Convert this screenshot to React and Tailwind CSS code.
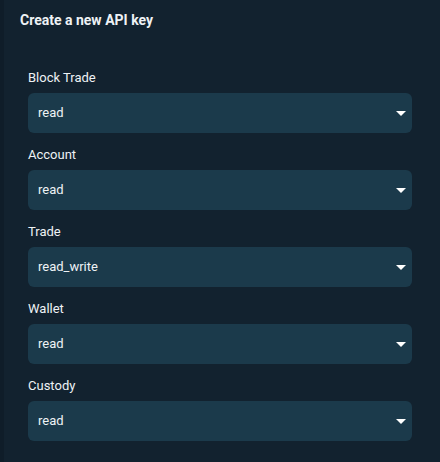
const fields = [
  { label: "Block Trade", value: "read" },
  { label: "Account", value: "read" },
  { label: "Trade", value: "read_write" },
  { label: "Wallet", value: "read" },
  { label: "Custody", value: "read" },
];

const Arrow = () => (
  <svg width="10" height="5" viewBox="0 0 10 5" className="shrink-0">
    <path d="M0 0 L10 0 L5 5 Z" fill="#ffffff" />
  </svg>
);

export default function App() {
  return (
    <div className="w-[440px] h-[462px] bg-[#0f1d29] font-['Roboto',sans-serif] text-[#eef2f5] overflow-hidden">
      <div className="ml-[4px] h-full bg-[#12222f] pt-[11px]">
        <h1 className="pl-[16px] text-[14px] font-bold leading-[18px]">Create a new API key</h1>
        <div className="mt-[40px] pl-[24px] pr-[28px] flex flex-col gap-[13px]">
          {fields.map((f) => (
            <div key={f.label} className="flex flex-col gap-[7px]">
              <label className="text-[13px] leading-[17px]">{f.label}</label>
              <div className="h-[40px] rounded-[6px] bg-[#1b3a4b] flex items-center justify-between pl-[10px] pr-[6px]">
                <span className="text-[13px]">{f.value}</span>
                <Arrow />
              </div>
            </div>
          ))}
        </div>
      </div>
    </div>
  );
}
